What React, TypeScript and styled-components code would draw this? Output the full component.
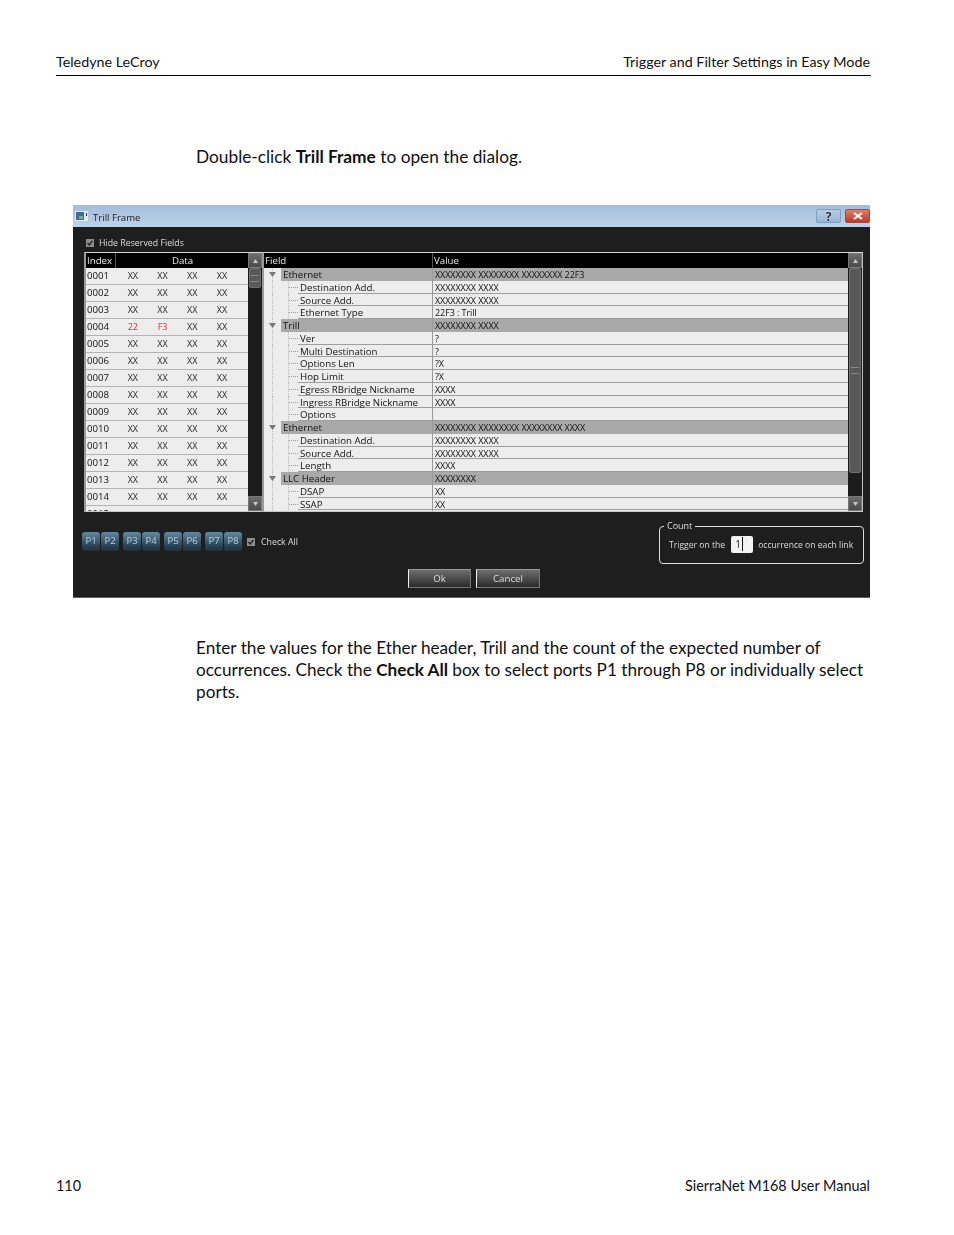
import React from 'react';
import styled, { createGlobalStyle } from 'styled-components';

const Global = createGlobalStyle`
  html, body { margin: 0; padding: 0; background: #fff; }
`;

const Page = styled.div`
  box-sizing: border-box;
  width: 954px;
  height: 1235px;
  padding: 52px 84px 0 56px;
  display: flex;
  flex-direction: column;
  font-family: 'Lato', 'Liberation Sans', sans-serif;
  color: #111;
  overflow: hidden;
`;

const RunHead = styled.header`
  display: flex;
  justify-content: space-between;
  height: 23px;
  line-height: 20px;
  font-size: 14.3px;
  border-bottom: 1px solid #000;
  margin-right: -1px;
  padding-right: 1px;
`;

const Intro = styled.p`
  margin: 70px 0 0 140px;
  font-size: 17.3px;
  line-height: 22px;
`;

const Para = styled.p`
  margin: 39px 0 0 140px;
  font-size: 17.2px;
  line-height: 22px;
  white-space: nowrap;
`;

const RunFoot = styled.footer`
  margin-top: auto;
  height: 59px;
  display: flex;
  justify-content: space-between;
  font-size: 14.4px;
  line-height: 20px;
`;

const Dialog = styled.section`
  box-sizing: border-box;
  margin: 37px 0 0 17px;
  width: 797px;
  height: 393px;
  background: #1e1e1e;
  border-bottom: 1px solid #5c6066;
  overflow: hidden;
  font-family: 'Open Sans', 'Liberation Sans', sans-serif;
  font-size: 9.7px;
  filter: blur(0.35px);
`;

const TitleBar = styled.div`
  height: 22px;
  display: flex;
  align-items: center;
  padding-left: 2px;
  gap: 5px;
  background: linear-gradient(#a3bcd9, #bdd4ea);
  color: #222;
`;

const TitleText = styled.span`
  flex: 1;
  font-size: 9.6px;
  padding-top: 2px;
`;

const HelpBtn = styled.div`
  width: 25px;
  height: 14px;
  display: flex;
  align-items: center;
  justify-content: center;
  border: 1px solid #7f9cbc;
  box-sizing: border-box;
  border-radius: 2px;
  background: linear-gradient(#b9cde3, #9ab6d4);
  color: #1f2c3a;
  text-shadow: 0 0 1px #fff;
  font-size: 12px;
  font-weight: 700;
  margin-right: -1px;
`;

const CloseBtn = styled.div`
  width: 25px;
  height: 14px;
  display: flex;
  align-items: center;
  justify-content: center;
  border: 1px solid #a04a3a;
  box-sizing: border-box;
  border-radius: 2px;
  background: linear-gradient(#dc7f6c, #bb3a26);
`;

const Content = styled.div`
  padding: 0 6px 0 11px;
  color: #ddd;
`;

const HideRow = styled.div`
  height: 25px;
  padding: 7px 0 0 2px;
  box-sizing: border-box;
  display: flex;
  align-items: center;
  gap: 5px;
  font-size: 8.8px;
`;

const Panels = styled.div`
  display: flex;
  height: 260px;
  width: 779px;
`;

const Panel = styled.div<{ $w: number; $edge?: boolean }>`
  box-sizing: border-box;
  width: ${p => p.$w}px;
  height: 260px;
  display: flex;
  background: #ededed;
  border-top: 1px solid #d8d8d8;
  border-left: 2px solid #9a9a9a;
  border-bottom: 1px solid #c8c8c8;
  border-right: ${p => (p.$edge ? '1px solid #c0c0c0' : '0')};
  overflow: hidden;
  color: #111;
`;

const PanelMain = styled.div`
  flex: 1;
  min-width: 0;
`;

const HeadRow = styled.div<{ $cols: string }>`
  display: grid;
  grid-template-columns: ${p => p.$cols};
  height: 15px;
  background: #000;
  color: #e8e8e8;
  line-height: 15px;
`;

const HeadCell = styled.div<{ $center?: boolean; $divider?: boolean }>`
  padding-left: 1px;
  text-align: ${p => (p.$center ? 'center' : 'left')};
  border-left: ${p => (p.$divider ? '1px solid #555' : '0')};
`;

const IndexRow = styled.div`
  display: grid;
  grid-template-columns: 29px repeat(4, 29.7px) 1fr;
  height: 17px;
  box-sizing: border-box;
  border-bottom: 1px solid #b4b4b4;
  line-height: 16px;
`;

const IndexCell = styled.div`
  padding-left: 1px;
`;

const DataCell = styled.div<{ $red?: boolean }>`
  text-align: center;
  font-size: 9px;
  position: relative;
  left: 3px;
  color: ${p => (p.$red ? '#e22' : '#2a2a2a')};
`;

const Scroll = styled.div`
  width: 14px;
  flex: none;
  background: #1c1c1c;
  display: flex;
  flex-direction: column;
`;

const ScrollBtn = styled.div`
  height: 15px;
  flex: none;
  background: linear-gradient(#6d6d6d, #4a4a4a);
  border: 1px solid #777;
  box-sizing: border-box;
  display: flex;
  align-items: center;
  justify-content: center;
`;

const ScrollTrack = styled.div`
  flex: 1;
  min-height: 0;
  padding: 0 1px;
`;

const Thumb = styled.div<{ $h: number }>`
  height: ${p => p.$h}px;
  box-sizing: border-box;
  background: #585858;
  border: 1px solid #6f6f6f;
  border-radius: 2px;
  display: flex;
  align-items: center;
  justify-content: center;
`;

const Grip = styled.div`
  width: 8px;
  height: 5px;
  border-top: 1px solid #8a8a8a;
  border-bottom: 1px solid #8a8a8a;
`;

const TreeRow = styled.div`
  display: grid;
  grid-template-columns: 168px 1fr;
  height: 12.75px;
  line-height: 13.5px;
  background: #ededed;
`;

const NameCell = styled.div`
  display: flex;
  min-width: 0;
  white-space: nowrap;
`;

const Gutter = styled.div<{ $w: number }>`
  width: ${p => p.$w}px;
  flex: none;
  position: relative;
  &::before {
    content: '';
    position: absolute;
    left: 8px;
    top: 0;
    bottom: 0;
    border-left: 1px dotted #bbb;
  }
`;

const Tick = styled.span`
  position: absolute;
  left: 25px;
  top: 6px;
  width: 9px;
  border-top: 1px dotted #999;
`;

const TreeBranch = styled.span`
  position: absolute;
  left: 24px;
  top: 0;
  bottom: 0;
  border-left: 1px dotted #bbb;
`;

const Triangle = styled.svg`
  position: absolute;
  left: 5px;
  top: 4px;
  z-index: 1;
`;

const NameText = styled.div<{ $group?: boolean }>`
  flex: 1;
  padding-left: 2px;
  background: ${p => (p.$group ? '#a9a9a9' : 'transparent')};
  border-bottom: ${p => (p.$group ? '0' : '1px solid #9e9e9e')};
  box-sizing: border-box;
  height: 12.75px;
`;

const ValueCell = styled.div<{ $group?: boolean }>`
  padding-left: 2px;
  box-sizing: border-box;
  height: 12.75px;
  font-size: 9px;
  letter-spacing: -0.08px;
  white-space: nowrap;
  border-left: 1px solid #999;
  background: ${p => (p.$group ? '#a9a9a9' : 'transparent')};
  border-bottom: ${p => (p.$group ? '0' : '1px solid #9e9e9e')};
`;

const BottomRow = styled.div`
  display: flex;
  justify-content: space-between;
  align-items: flex-start;
  margin-top: 14px;
  height: 38px;
`;

const PortRow = styled.div`
  display: flex;
  align-items: center;
  gap: 4px;
  margin: 6px 0 0 -2px;
`;

const PortPair = styled.div`
  display: flex;
  gap: 1px;
`;

const Port = styled.div`
  width: 18px;
  height: 19px;
  box-sizing: border-box;
  border-radius: 3px;
  background: linear-gradient(#64899e, #3c5d72 45%, #243e4e 80%, #2a3036);
  color: #bdcfd9;
  text-align: center;
  line-height: 17px;
  font-size: 9.5px;
`;

const CheckLabel = styled.label`
  display: flex;
  align-items: center;
  gap: 6px;
  margin-left: 1px;
  color: #ddd;
  font-size: 8.8px;
`;

const CountSet = styled.fieldset`
  box-sizing: border-box;
  margin: -5px 0 0 0;
  padding: 0 0 5px 9px;
  width: 205px;
  height: 43px;
  border: 1px solid #ddd;
  border-radius: 4px;
  display: flex;
  align-items: center;
  font-size: 8.6px;
  white-space: nowrap;
  color: #ddd;
`;

const CountLegend = styled.legend`
  padding: 0 3px;
  margin-left: -5px;
  font-size: 9px;
  line-height: 10px;
`;

const CountInput = styled.div`
  width: 22px;
  height: 17px;
  margin: 0 5px 0 6px;
  box-sizing: border-box;
  background: #f4f4f4;
  border-radius: 2px;
  color: #222;
  padding-left: 4px;
  line-height: 17px;
  font-size: 10px;
`;

const Caret = styled.span`
  border-left: 1px solid #111;
  margin-left: 1px;
`;

const Actions = styled.div`
  display: flex;
  gap: 5px;
  margin: 5px 0 0 324px;
`;

const ActionBtn = styled.div<{ $w: number }>`
  width: ${p => p.$w}px;
  height: 19px;
  box-sizing: border-box;
  background: linear-gradient(#6e6e6e, #2a2a2a);
  border-left: 1px solid #eee;
  border-top: 1px solid #999;
  border-right: 1px solid #777;
  border-bottom: 1px solid #777;
  color: #ddd;
  text-align: center;
  line-height: 17px;
`;

const Check = () => (
  <svg width="8" height="8" viewBox="0 0 8 8">
    <rect width="8" height="8" fill="#8d8d8d" />
    <path d="M1.5 4 L3.3 6 L6.5 1.8" stroke="#222" strokeWidth="1.4" fill="none" />
  </svg>
);

const Arrow = ({ up }: { up?: boolean }) => (
  <svg width="5" height="4" viewBox="0 0 5 4">
    <path d={up ? 'M2.5 0 L5 4 L0 4 Z' : 'M0 0 L5 0 L2.5 4 Z'} fill="#c8c8c8" />
  </svg>
);

const rowsData = Array.from({ length: 15 }, (_, i) => String(i + 1).padStart(4, '0'));

type T = { n: string; v: string; g?: boolean };
const tree: T[] = [
  { n: 'Ethernet', v: 'XXXXXXXX XXXXXXXX XXXXXXXX 22F3', g: true },
  { n: 'Destination Add.', v: 'XXXXXXXX XXXX' },
  { n: 'Source Add.', v: 'XXXXXXXX XXXX' },
  { n: 'Ethernet Type', v: '22F3 : Trill' },
  { n: 'Trill', v: 'XXXXXXXX XXXX', g: true },
  { n: 'Ver', v: '?' },
  { n: 'Multi Destination', v: '?' },
  { n: 'Options Len', v: '?X' },
  { n: 'Hop Limit', v: '?X' },
  { n: 'Egress RBridge Nickname', v: 'XXXX' },
  { n: 'Ingress RBridge Nickname', v: 'XXXX' },
  { n: 'Options', v: '' },
  { n: 'Ethernet', v: 'XXXXXXXX XXXXXXXX XXXXXXXX XXXX', g: true },
  { n: 'Destination Add.', v: 'XXXXXXXX XXXX' },
  { n: 'Source Add.', v: 'XXXXXXXX XXXX' },
  { n: 'Length', v: 'XXXX' },
  { n: 'LLC Header', v: 'XXXXXXXX', g: true },
  { n: 'DSAP', v: 'XX' },
  { n: 'SSAP', v: 'XX' },
  { n: '', v: '' },
];

const ScrollBar = ({ thumb, grip }: { thumb: number; grip?: boolean }) => (
  <Scroll>
    <ScrollBtn><Arrow up /></ScrollBtn>
    <ScrollTrack>
      <Thumb $h={thumb}>{grip && <Grip />}</Thumb>
    </ScrollTrack>
    <ScrollBtn><Arrow /></ScrollBtn>
  </Scroll>
);

export default function App() {
  return (
    <Page>
      <Global />
      <RunHead>
        <span>Teledyne LeCroy</span>
        <span>Trigger and Filter Settings in Easy Mode</span>
      </RunHead>
      <Intro>Double-click <b>Trill Frame</b> to open the dialog.</Intro>
      <Dialog>
        <TitleBar>
          <svg width="13" height="10" viewBox="0 0 13 10">
            <rect width="13" height="10" fill="#e4e8ee" />
            <rect x="1" y="1" width="8" height="8" fill="#4a6a8a" />
            <rect x="4" y="5" width="4" height="3" fill="#6fb0a0" />
            <rect x="11" y="2" width="1" height="3" fill="#234" />
          </svg>
          <TitleText>Trill Frame</TitleText>
          <HelpBtn>?</HelpBtn>
          <CloseBtn>
            <svg width="10" height="8" viewBox="0 0 10 8">
              <path d="M1 1 L9 7 M9 1 L1 7" stroke="#fff" strokeWidth="2" />
            </svg>
          </CloseBtn>
        </TitleBar>
        <Content>
          <HideRow><Check />Hide Reserved Fields</HideRow>
          <Panels>
            <Panel $w={178}>
              <PanelMain>
                <HeadRow $cols="29px 1fr">
                  <HeadCell>Index</HeadCell>
                  <HeadCell $center $divider>Data</HeadCell>
                </HeadRow>
                {rowsData.map(id => (
                  <IndexRow key={id}>
                    <IndexCell>{id}</IndexCell>
                    {id !== '0015' && [0, 1, 2, 3].map(c => {
                      const red = id === '0004' && c < 2;
                      const text = red ? (c === 0 ? '22' : 'F3') : 'XX';
                      return <DataCell key={c} $red={red}>{text}</DataCell>;
                    })}
                  </IndexRow>
                ))}
              </PanelMain>
              <ScrollBar thumb={20} grip />
            </Panel>
            <Panel $w={601} $edge>
              <PanelMain>
                <HeadRow $cols="168px 1fr">
                  <HeadCell>Field</HeadCell>
                  <HeadCell $divider>Value</HeadCell>
                </HeadRow>
                {tree.map((r, i) => (
                  <TreeRow key={i}>
                    <NameCell>
                      <Gutter $w={r.g ? 17 : 34}>
                        {r.g && (
                          <Triangle width="7" height="5" viewBox="0 0 7 5">
                            <path d="M0 0 L7 0 L3.5 5 Z" fill="#777" />
                          </Triangle>
                        )}
                        {!r.g && r.n && <TreeBranch />}
                        {!r.g && r.n && <Tick />}
                      </Gutter>
                      <NameText $group={r.g}>{r.n}</NameText>
                    </NameCell>
                    <ValueCell $group={r.g}>{r.v}</ValueCell>
                  </TreeRow>
                ))}
              </PanelMain>
              <ScrollBar thumb={205} grip />
            </Panel>
          </Panels>
          <BottomRow>
            <PortRow>
              {[['P1', 'P2'], ['P3', 'P4'], ['P5', 'P6'], ['P7', 'P8']].map(pair => (
                <PortPair key={pair[0]}>
                  {pair.map(p => <Port key={p}>{p}</Port>)}
                </PortPair>
              ))}
              <CheckLabel><Check />Check All</CheckLabel>
            </PortRow>
            <CountSet>
              <CountLegend>Count</CountLegend>
              Trigger on the
              <CountInput>1<Caret /></CountInput>
              occurrence on each link
            </CountSet>
          </BottomRow>
          <Actions>
            <ActionBtn $w={63}>Ok</ActionBtn>
            <ActionBtn $w={64}>Cancel</ActionBtn>
          </Actions>
        </Content>
      </Dialog>
      <Para>
        Enter the values for the Ether header, Trill and the count of the expected number of<br />
        occurrences. Check the <b>Check All</b> box to select ports P1 through P8 or individually select<br />
        ports.
      </Para>
      <RunFoot>
        <span>110</span>
        <span>SierraNet M168 User Manual</span>
      </RunFoot>
    </Page>
  );
}
